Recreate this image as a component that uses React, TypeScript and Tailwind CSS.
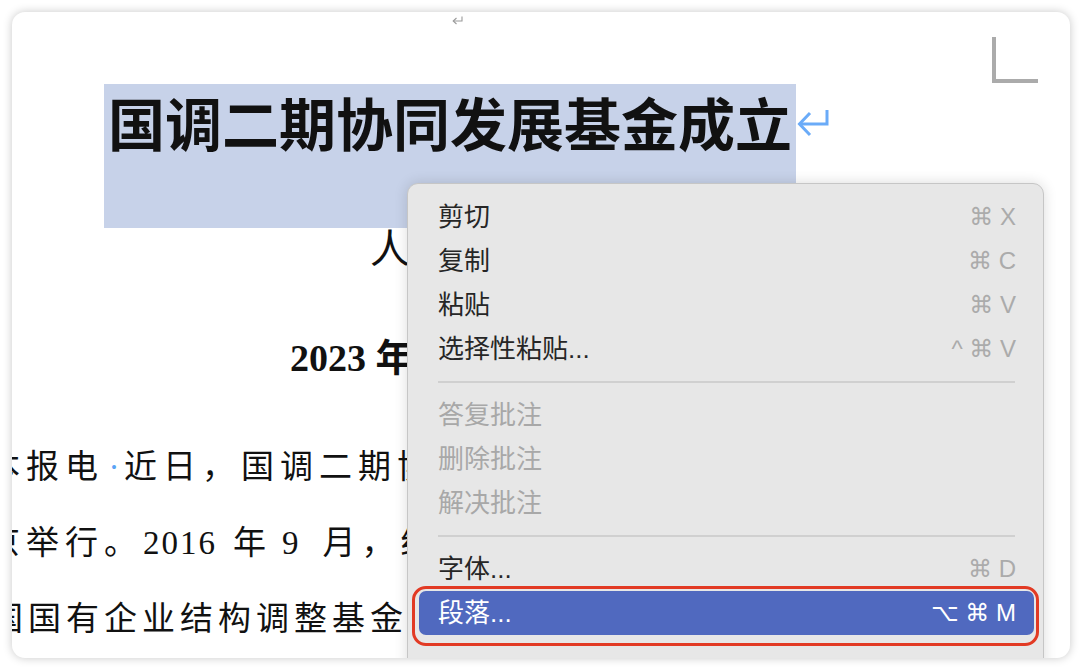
import React from 'react';

const docFont = { fontFamily: '"Liberation Serif", "Noto Sans CJK SC", serif' };
const menuFont = { fontFamily: '"Liberation Sans", "Noto Sans CJK SC", sans-serif' };
const keyFont = { fontFamily: '"Liberation Sans", "DejaVu Sans", sans-serif' };

type Item = { label: string; keys?: string; disabled?: boolean; active?: boolean } | 'sep';

const items: Item[] = [
  { label: '剪切', keys: '⌘ X' },
  { label: '复制', keys: '⌘ C' },
  { label: '粘贴', keys: '⌘ V' },
  { label: '选择性粘贴...', keys: '^ ⌘ V' },
  'sep',
  { label: '答复批注', disabled: true },
  { label: '删除批注', disabled: true },
  { label: '解决批注', disabled: true },
  'sep',
  { label: '字体...', keys: '⌘ D' },
  { label: '段落...', keys: '⌥ ⌘ M', active: true },
];

function ContextMenu() {
  return (
    <div
      className="absolute left-[395px] top-[171px] w-[637px] h-[520px] rounded-[11px] border border-[#c6c6c6] bg-[#e7e7e7] pt-[11px] shadow-[0_0_14px_rgba(0,0,0,0.14)]"
      style={menuFont}
    >
      {items.map((it, i) =>
        it === 'sep' ? (
          <div key={i} className="h-[22px] flex items-center ml-[30px] mr-[28px]">
            <div className="h-[2px] w-full bg-[#d0d0d0]" />
          </div>
        ) : (
          <div
            key={i}
            className={
              'h-[44px] ml-[11px] mr-[9px] pl-[19px] pr-[18px] flex items-center justify-between rounded-[7px] ' +
              (it.active ? 'bg-[#5069bf] text-white' : it.disabled ? 'text-[#a8a8a8]' : 'text-[#262626]')
            }
          >
            <span className="text-[26px] leading-none">{it.label}</span>
            {it.keys && (
              <span
                className={'text-[24px] leading-none whitespace-pre ' + (it.active ? 'text-white' : 'text-[#ababab]')}
                style={keyFont}
              >
                {it.keys}
              </span>
            )}
          </div>
        )
      )}
      {/* red annotation ring */}
      <div className="absolute left-[4px] top-[402px] w-[627px] h-[60px] rounded-[14px] border-[3px] border-[#e23a24]" />
    </div>
  );
}

export default function App() {
  return (
    <div className="w-[1082px] h-[672px] bg-white pt-[12px] pl-[12px]">
      <div
        className="relative w-[1058px] h-[646px] bg-white rounded-[13px] overflow-hidden shadow-[0_0_10px_rgba(0,0,0,0.22)]"
        style={docFont}
      >
        {/* top strip: empty paragraph mark + page corner */}
        <div className="h-[72px] flex items-start">
          <svg width="11" height="9" viewBox="0 0 11 9" className="ml-[440px] mt-[4px]">
            <path d="M10 0.5 V5 H1.5" fill="none" stroke="#9a9a9a" strokeWidth="1.1" />
            <path d="M4.5 2 L1.2 5 L4.5 8" fill="none" stroke="#9a9a9a" strokeWidth="1.1" />
          </svg>
          <div className="ml-auto mr-[32px] mt-[25px] w-[46px] h-[46px] border-l-4 border-b-4 border-[#ababab]" />
        </div>

        {/* title */}
        <div className="flex items-start pl-[92px]">
          <div className="w-[692px] h-[144px] bg-[#c7d2e9] pl-[4px]">
            <div
              className="text-[57px] leading-[74px] font-bold text-[#111] whitespace-nowrap"
              style={{ fontFamily: '"Noto Sans CJK SC", sans-serif' }}
            >
              国调二期协同发展基金成立
            </div>
          </div>
          <svg width="32" height="29" viewBox="0 0 32 29" className="ml-[1px] mt-[25px]">
            <path d="M30 1 V15 H3" fill="none" stroke="#6aabf8" strokeWidth="3" />
            <path d="M13 4 L2.5 15 L13 26" fill="none" stroke="#6aabf8" strokeWidth="3" />
          </svg>
        </div>

        {/* byline */}
        <div className="pl-[358px] text-[40px] leading-[44px] text-[#111] whitespace-nowrap">人民日报记者 王观</div>

        {/* date */}
        <div className="mt-[64px] pl-[278px] text-[38px] leading-[44px] font-bold text-[#111] whitespace-nowrap">
          2023 年 6 月 16 日
        </div>

        {/* body */}
        <div className="mt-[49px] ml-[-25px] text-[33px] leading-[76px] text-[#111] whitespace-nowrap">
          <div className="tracking-[6px]">
            本报电<span className="inline-block w-[20px] text-center text-[#5aa3f5] tracking-normal">·</span>近日，国调二期协同发展基金成立大会在北京举行
          </div>
          <div className="tracking-[6px]">
            京举行。<span className="tracking-[2px]">2016</span>
            <span className="ml-[16px]">年</span>
            <span className="ml-[10px]">9</span>
            <span className="ml-[18px]">月，</span>经国务院批准设立
          </div>
          <div className="tracking-[5px] ml-[3px]">国国有企业结构调整基金股份有限公司</div>
        </div>

        <ContextMenu />
      </div>
    </div>
  );
}
